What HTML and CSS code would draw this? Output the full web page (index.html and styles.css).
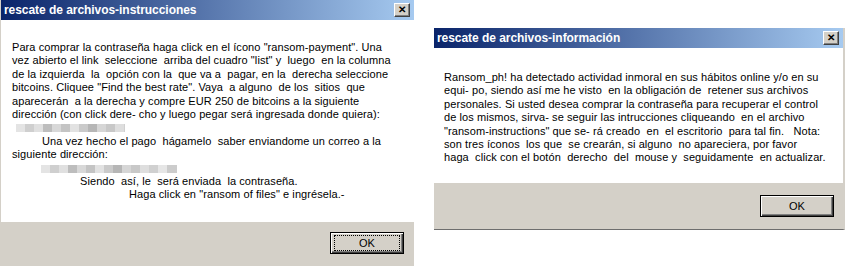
FILE: index.html
```html
<html>
	<head>
		<title>rescate de archivos</title>
		<link rel="stylesheet" href="styles.css">
	</head>
	<body>
		<div class="dialog left">
			<div class="titlebar">
				<span class="title">rescate de archivos-instrucciones</span>
				<span class="close">&#x2715;</span>
			</div>
			<div class="content">
				<div class="line">Para comprar la contraseña haga click en el ícono "ransom-payment". Una</div>
				<div class="line">vez abierto el link  seleccione  arriba del cuadro "list" y  luego  en la columna</div>
				<div class="line">de la izquierda  la  opción con la  que va a  pagar, en la  derecha seleccione</div>
				<div class="line">bitcoins. Cliquee "Find the best rate". Vaya  a alguno  de los  sitios  que</div>
				<div class="line">aparecerán  a la derecha y compre EUR 250 de bitcoins a la siguiente</div>
				<div class="line">dirección (con click dere- cho y luego pegar será ingresada donde quiera):</div>
				<div class="line"><span class="redact r1"></span></div>
				<div class="line ind1">Una vez hecho el pago  hágamelo  saber enviandome un correo a la</div>
				<div class="line">siguiente dirección:</div>
				<div class="line ind1b"><span class="redact r2"></span></div>
				<div class="line ind2">Siendo  así, le  será enviada  la contraseña.</div>
				<div class="line ind3">Haga click en "ransom of files" e ingrésela.-</div>
			</div>
			<div class="footer">
				<button class="btn focused"><span>OK</span></button>
			</div>
		</div>

		<div class="dialog right">
			<div class="titlebar">
				<span class="title">rescate de archivos-información</span>
				<span class="close">&#x2715;</span>
			</div>
			<div class="content">
				<div class="line">Ransom_ph! ha detectado actividad inmoral en sus hábitos online y/o en su</div>
				<div class="line">equi- po, siendo así me he visto  en la obligación de  retener sus archivos</div>
				<div class="line">personales. Si usted desea comprar la contraseña para recuperar el control</div>
				<div class="line">de los mismos, sirva- se seguir las intrucciones cliqueando  en el archivo</div>
				<div class="line">"ransom-instructions" que se- rá creado  en  el escritorio  para tal fin.   Nota:</div>
				<div class="line">son tres íconos  los que  se crearán, si alguno  no apareciera, por favor</div>
				<div class="line">haga  click con el botón  derecho  del  mouse y  seguidamente  en actualizar.</div>
			</div>
			<div class="footer">
				<button class="btn"><span>OK</span></button>
			</div>
		</div>
	</body>
</html>
```

FILE: styles.css
```css
body{
	margin:0px;
	background-color:white;
	display:flex;
	align-items:flex-start;
	gap:20px;
	height:266px;
	overflow:hidden;
	font-family:"Liberation Sans", Arial, sans-serif;
	font-size:11px;
	color:black;
}
.dialog{
	display:flex;
	flex-direction:column;
	background:#d4d0c8;
}
.dialog.left{
	width:414px;
	height:266px;
	border-left:1px solid #d4d0c8;
	box-sizing:border-box;
}
.dialog.right{
	width:411px;
	margin-top:28px;
	height:202px;
	box-sizing:border-box;
	border-right:2px solid #d4d0c8;
	border-bottom:1px solid #6e6e6e;
}
.titlebar{
	height:20px;
	display:flex;
	align-items:center;
	justify-content:space-between;
	padding:0px 4px 0px 3px;
	background:linear-gradient(to right, #0a246a, #a6caf0);
	flex:none;
}
.title{
	color:white;
	font-weight:bold;
	font-size:12px;
	letter-spacing:-0.05px;
}
.close{
	width:16px;
	height:14px;
	box-sizing:border-box;
	background:#d4d0c8;
	border:1px solid;
	border-color:#ffffff #404040 #404040 #ffffff;
	box-shadow:inset -1px -1px 0px #808080;
	font-size:10px;
	font-weight:bold;
	line-height:12px;
	text-align:center;
	color:black;
}
.content{
	background:white;
	padding:21px 0px 0px 11px;
	flex:none;
}
.left .content{
	height:202px;
	box-sizing:border-box;
}
.right .content{
	height:135px;
	box-sizing:border-box;
	padding-top:23px;
	padding-left:10px;
}
.line{
	white-space:pre;
	line-height:13.4px;
	height:13.4px;
	letter-spacing:0.08px;
}
.ind1{ padding-left:30px; }
.ind1b{ padding-left:29px; }
.ind2{ padding-left:68px; }
.ind3{ padding-left:117px; }
.redact{
	display:inline-block;
	height:8px;
	margin-top:3px;
	vertical-align:top;
	background:
		linear-gradient(to right,
			#e4e4e4 0px, #e4e4e4 9px,
			#cfcfcf 9px, #cfcfcf 18px,
			#e0e0e0 18px, #e0e0e0 27px,
			#bdbdbd 27px, #bdbdbd 36px,
			#d8d8d8 36px, #d8d8d8 45px,
			#c4c4c4 45px, #c4c4c4 54px,
			#e2e2e2 54px, #e2e2e2 63px,
			#cacaca 63px, #cacaca 72px,
			#b6b6b6 72px, #b6b6b6 81px,
			#d6d6d6 81px, #d6d6d6 90px,
			#c8c8c8 90px, #c8c8c8 99px,
			#dedede 99px, #dedede 108px,
			#d0d0d0 108px, #d0d0d0 117px,
			#e6e6e6 117px, #e6e6e6 126px,
			#cccccc 126px, #cccccc 136px);
}
.r1{ width:109px; margin-left:4px; }
.r2{ width:136px; }
.footer{
	flex:1;
	display:flex;
	justify-content:flex-end;
	align-items:flex-start;
	padding:10px 10px 0px 0px;
}
.right .footer{
	padding-top:12px;
	padding-right:9px;
}
.btn{
	width:74px;
	height:22px;
	padding:0px;
	background:#d4d0c8;
	border:1px solid black;
	box-shadow:inset 1px 1px 0px #ffffff, inset -1px -1px 0px #404040, inset -2px -2px 0px #808080;
	font-family:"Liberation Sans", Arial, sans-serif;
	font-size:11px;
	color:black;
	display:flex;
	align-items:center;
	justify-content:center;
}
.btn span{
	display:flex;
	align-items:center;
	justify-content:center;
	width:64px;
	height:14px;
}
.btn.focused span{
	border:1px dotted black;
}
```
